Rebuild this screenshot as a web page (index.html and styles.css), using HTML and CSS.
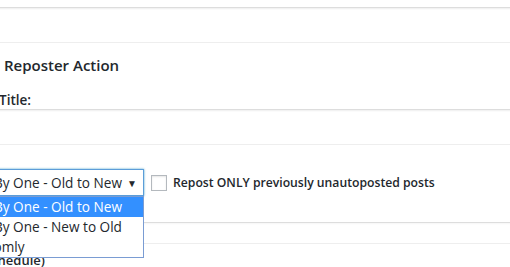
FILE: index.html
```html
<!DOCTYPE html>
<html lang="en">
<head>
    <meta charset="UTF-8">
    <title>Reposter Action</title>
    <link rel="stylesheet" href="styles.css">
</head>
<body>
    <div class="page">
        <input type="text" class="wide-input top-input">

        <h3 class="section-title">Reposter Action</h3>

        <label class="field-label" for="title">Title:</label>
        <input type="text" id="title" class="wide-input">

        <div class="action-row">
            <div class="select-wrap">
                <div class="select-box">
                    <span class="select-text">By One - Old to New</span>
                    <span class="select-arrow">&#9660;</span>
                </div>
                <ul class="select-list">
                    <li class="selected">By One - Old to New</li>
                    <li>By One - New to Old</li>
                    <li><span class="opt-cut">Randomly</span></li>
                </ul>
            </div>
            <label class="check-label">
                <span class="checkbox"></span>
                Repost ONLY previously unautoposted posts
            </label>
        </div>

        <div class="separator"></div>

        <div class="next-label">Schedule)</div>
    </div>
</body>
</html>
```

FILE: styles.css
```css
body {
    margin: 0;
    background: #fff;
    color: #23282d;
    font-family: "Open Sans", "Liberation Sans", sans-serif;
    font-size: 13px;
    overflow: hidden;
}

.page {
    margin: 0 -10px 0 -8px;
}

.wide-input {
    display: block;
    box-sizing: border-box;
    width: 100%;
    height: 36px;
    margin: 0;
    border: 1px solid #ddd;
    border-bottom-color: #eee;
    border-left: 0;
    border-right: 0;
    box-shadow: inset 0 1px 2px rgba(0, 0, 0, 0.07);
    background: #fff;
}

.top-input {
    margin-top: 7px;
}

.section-title {
    margin: 12px 0 0 12px;
    font-size: 15px;
    font-weight: 600;
    line-height: 20px;
}

.field-label {
    display: block;
    margin: 17px 0 0 7px;
    font-size: 13.5px;
    font-weight: 600;
    line-height: 17px;
}

.action-row {
    display: flex;
    align-items: center;
    margin-top: 24px;
}

.select-wrap {
    position: relative;
    width: 152px;
}

.select-box {
    box-sizing: border-box;
    height: 27px;
    display: flex;
    align-items: center;
    justify-content: space-between;
    padding: 0 6px 0 1px;
    border: 1px solid #5b9dd9;
    box-shadow: 0 0 2px rgba(30, 140, 190, 0.8);
    font-size: 13.6px;
    white-space: nowrap;
}

.select-arrow {
    font-size: 10px;
    color: #23282d;
}

.select-list {
    position: absolute;
    top: 100%;
    left: 0;
    right: 0;
    margin: 0;
    padding: 0;
    list-style: none;
    background: #fff;
    border: 1px solid #7a9cd3;
    font-size: 13.6px;
    z-index: 2;
}

.select-list li {
    height: 20px;
    line-height: 20px;
    padding-left: 1px;
    white-space: nowrap;
    overflow: hidden;
}

.select-list .selected {
    background: #3390ff;
    color: #fff;
}

.opt-cut {
    margin-left: -33px;
}

.check-label {
    display: flex;
    align-items: center;
    margin-left: 7px;
    font-size: 12.2px;
    font-weight: 600;
}

.checkbox {
    box-sizing: border-box;
    width: 16px;
    height: 16px;
    margin-right: 6px;
    border: 1px solid #b4b9be;
    box-shadow: inset 0 1px 2px rgba(0, 0, 0, 0.1);
}

.separator {
    height: 20px;
    margin-top: 26px;
    border-top: 1px solid #ddd;
    border-bottom: 1px solid #eee;
    box-shadow: inset 0 1px 2px rgba(0, 0, 0, 0.04);
}

.next-label {
    margin: 6px 0 0 -8px;
    font-weight: 600;
    line-height: 20px;
}
```
